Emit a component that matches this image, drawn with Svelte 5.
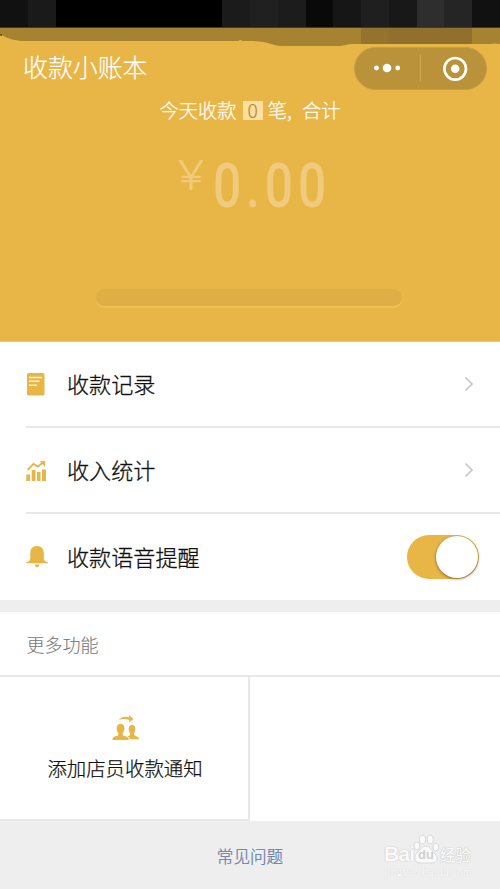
<script>
    let voiceOn = true;

    const blocks = [
        "#111111", "#1a1a1a", "#000000", "#000000", "#000000", "#000000",
        "#000000", "#000000", "#1b1b1b", "#202020", "#1c1c1c", "#090909",
        "#161616", "#1f1f1f", "#181818", "#2e2e2e", "#252525", "#111111"
    ];

    function toggleVoice(){
        voiceOn = !voiceOn;
    }
</script>

<div class="page">
    <header class="hero">
        <div class="status">
            {#each blocks as color}
                <span style="background:{color}"></span>
            {/each}
        </div>
        <svg class="shade" width="500" height="19" viewBox="0 0 500 19">
            <path fill="#a58331" d="M0 0H500V16L495 15.500L490 16H350Q342 18 338 18H282C272 18 268 13 250 13H243L240 12L238 13H21C12 12 7 10 0 6Z"/>
            <path fill="#755927" fill-opacity=".35" d="M361 0H472V16H361Z"/>
            <path fill="#755927" fill-opacity=".12" d="M389 0H472V16H389Z"/>
            <path fill="#111" d="M0 6.500H2V7.500H0Z"/>
        </svg>
        <div class="nav">
            <h1>收款小账本</h1>
            <div class="capsule">
                <svg width="133" height="44" viewBox="0 0 133 44">
                    <circle cx="22.500" cy="21" r="2.400" fill="#fff"/>
                    <circle cx="33" cy="21" r="4.300" fill="#fff"/>
                    <circle cx="43.700" cy="21" r="2.400" fill="#fff"/>
                    <path d="M66.500 8V34" stroke="#cfa955"/>
                    <circle cx="101.200" cy="21.800" r="10.800" fill="none" stroke="#fff" stroke-width="2.700"/>
                    <circle cx="101.200" cy="21.800" r="4.300" fill="#fff"/>
                </svg>
            </div>
        </div>
        <div class="today">
            <span>今天收款</span><span class="count">0</span><span>笔</span><span class="comma">,</span><span>合计</span>
        </div>
        <div class="amount">
            <span class="yen">￥</span>
            <span class="number">0.00</span>
        </div>
        <div class="slot"></div>
    </header>

    <section class="list">
        <div class="row">
            <svg class="icon" width="24" height="24" viewBox="0 0 24 24">
                <rect x="1" y="1" width="17.500" height="22.500" rx="1.600" fill="#e8b547"/>
                <path d="M3 5.500H16M3 9.200H13.500M3 13.200H11" stroke="#fff1cd" stroke-width="1.500"/>
            </svg>
            <span class="label">收款记录</span>
            <svg class="arrow" width="10" height="16" viewBox="0 0 10 16">
                <path d="M1.500 1.500L8 8L1.500 14.500" fill="none" stroke="#c7c7cc" stroke-width="1.700"/>
            </svg>
        </div>
        <div class="row">
            <svg class="icon" width="24" height="24" viewBox="0 0 24 24">
                <path fill="#e8b547" d="M.3 16.500H4V23H.3ZM5.700 12H9.500V23H5.700ZM11 14H14.500V23H11ZM16 11.500H20V23H16Z"/>
                <path d="M1.500 12L7.500 6L12 8.500L17.500 4" fill="none" stroke="#e8b547" stroke-width="1.900"/>
                <path fill="#e8b547" d="M13.800 3.200L19.300 3L19 8.700Z"/>
            </svg>
            <span class="label">收入统计</span>
            <svg class="arrow" width="10" height="16" viewBox="0 0 10 16">
                <path d="M1.500 1.500L8 8L1.500 14.500" fill="none" stroke="#c7c7cc" stroke-width="1.700"/>
            </svg>
        </div>
        <div class="row">
            <svg class="icon" width="24" height="24" viewBox="0 0 24 24">
                <path fill="#e8b547" d="M11 1C6.500 1 4.300 4 4.300 8V13.500C4.300 15.500 3 16.500.3 17.300V18.300H21.900V17.300C19 16.500 17.800 15.500 17.800 13.500V8C17.800 4 15.500 1 11 1ZM8.600 19.500H13.400C13 21.300 12 22.200 11 22.200S9 21.300 8.600 19.500Z"/>
            </svg>
            <span class="label">收款语音提醒</span>
            <button class="switch" class:on={voiceOn} aria-label="收款语音提醒" on:click={toggleVoice}><i></i></button>
        </div>
    </section>

    <section class="more">
        <h2>更多功能</h2>
        <div class="grid">
            <div class="cell">
                <svg width="28" height="28" viewBox="0 0 28 28">
                    <g fill="#e8b547" transform="translate(1 0)">
                        <path d="M6.500 5.500C9.500 1.500 13 1.300 17 2.500V.3L21.500 4L17.300 7.300V5C13 3.700 10 3.700 6.500 5.500Z"/>
                        <path d="M8.500 9C5.700 9 4.500 11 4.700 13.700C4.900 16 5.500 17 6.300 18V19.700C6 21.200.8 21 .5 24V25H16.700V24C16.400 21 11 21.200 10.700 19.700V18C11.700 17 12.200 16 12.400 13.700C12.600 11 11.400 9 8.500 9Z"/>
                        <path d="M20 10C17.500 10 16.500 12 16.700 14.300C16.900 16.300 17.400 17.300 18.100 18.100V19.500C18 20.500 17 20.800 15.500 21.300C17 22.200 17.700 23 17.800 24.200H27V23.500C26.500 21.200 22.300 21 22 19.500V18.100C22.700 17.300 23.200 16.300 23.400 14.300C23.600 12 22.500 10 20 10Z"/>
                    </g>
                </svg>
                <span>添加店员收款通知</span>
            </div>
            <div class="cell empty"></div>
        </div>
    </section>

    <footer>
        <span class="faq">常见问题</span>
        <div class="watermark">
            <div class="brand">
                <span class="bai">Bai</span>
                <span class="paw">
                    <svg width="26" height="30" viewBox="0 0 26 30">
                        <g fill="#fafafa" stroke="#d8d8d8" stroke-width="1">
                            <ellipse cx="3.800" cy="12" rx="3" ry="4"/>
                            <ellipse cx="9.500" cy="5.500" rx="3" ry="4.300"/>
                            <ellipse cx="17.200" cy="5.500" rx="3" ry="4.300"/>
                            <ellipse cx="22.800" cy="13" rx="2.900" ry="4"/>
                            <path d="M13 12C9 12 8 16 5 18C0 22 1 29 7 29H19C25 29 26 23 21 19C18 16 17 12 13 12Z"/>
                        </g>
                    </svg>
                    <b>du</b>
                </span>
                <span class="exp">经验</span>
            </div>
            <div class="site">jingyan.baidu.com</div>
        </div>
    </footer>
</div>

<style>
    :global(body){
        margin: 0;
    }
    .page{
        width: 500px;
        height: 889px;
        display: flex;
        flex-direction: column;
        overflow: hidden;
        background: #eeeeee;
        font-family: "Noto Sans CJK SC", sans-serif;
        font-weight: 300;
        color: #111;
    }
    .hero{
        flex: none;
        box-sizing: border-box;
        height: 342px;
        display: flex;
        flex-direction: column;
        background: #e8b547;
        border-bottom: 1px solid #efc773;
    }
    .status{
        display: grid;
        grid-template-columns: repeat(18, 1fr);
        height: 27px;
        border-bottom: 1px solid #493918;
    }
    .shade{
        display: block;
        flex: none;
    }
    .nav{
        display: flex;
        justify-content: space-between;
        padding: 0 13px 0 23px;
        height: 43px;
    }
    h1{
        margin: 0;
        font-size: 24.900px;
        line-height: 38px;
        font-weight: 300;
        color: #fff;
        -webkit-text-stroke: .2px #fff;
    }
    .capsule{
        width: 131px;
        height: 41px;
        border: 1px solid #c39d4a;
        border-radius: 22px;
        background: #b99239;
    }
    .capsule svg{
        display: block;
        margin: -1px;
    }
    .today{
        display: flex;
        align-items: center;
        justify-content: center;
        height: 20px;
        margin-top: 10px;
        font-size: 19.300px;
        line-height: 20px;
        color: #fffaf0;
        -webkit-text-stroke: .3px #fffaf0;
    }
    .count{
        width: 20px;
        height: 19px;
        margin: 0 5px 0 6px;
        background: #fde0a0;
        color: #b48c36;
        -webkit-text-stroke: .2px #b48c36;
        line-height: 18px;
        text-align: center;
    }
    .comma{
        width: 15px;
    }
    .amount{
        display: flex;
        height: 60px;
        margin-top: 36px;
        padding-left: 178px;
    }
    .yen{
        flex: none;
        width: 40px;
        margin: 0 -7px;
        font-size: 40px;
        line-height: 32px;
        color: #f0cb7d;
        -webkit-text-stroke: .7px #f0cb7d;
    }
    .number{
        font-family: Roboto, sans-serif;
        font-size: 60.500px;
        line-height: 61px;
        font-weight: 500;
        letter-spacing: 6px;
        color: #f0cb7d;
        margin-left: 9px;
        transform: scaleX(.82);
        transform-origin: left;
    }
    .slot{
        width: 306px;
        height: 17px;
        margin: 73px 0 0 96px;
        border-radius: 9px;
        background: #dfaf45;
        box-shadow: 0 2px 0 #efbf58;
    }
    .list{
        flex: none;
        background: #fff;
        height: 258px;
    }
    .row{
        display: flex;
        align-items: center;
        box-sizing: border-box;
        height: 86px;
        margin-left: 26px;
        padding-right: 26px;
        border-bottom: 2px solid #e8e8e8;
    }
    .row:last-child{
        border-bottom: 0;
        padding-right: 21px;
    }
    .label{
        flex: 1;
        margin-left: 17px;
        padding-bottom: 2px;
        font-size: 22.100px;
        line-height: 32px;
        -webkit-text-stroke: .3px #111;
    }
    .switch{
        width: 72px;
        height: 44px;
        padding: 1px;
        border: 0;
        border-radius: 23px;
        background: #ddd;
        display: flex;
    }
    .switch.on{
        background: #e8b547;
        justify-content: flex-end;
    }
    .switch i{
        width: 42px;
        height: 42px;
        border-radius: 50%;
        background: #fff;
        box-shadow: 0 1px 3px rgba(0, 0, 0, .45);
    }
    .more{
        flex: none;
        margin-top: 12px;
        background: #fff;
    }
    h2{
        margin: 0;
        height: 63px;
        padding-left: 26.500px;
        border-bottom: 2px solid #e8e8e8;
        font-size: 18px;
        line-height: 65px;
        font-weight: 300;
        color: #777;
        -webkit-text-stroke: .1px #777;
    }
    .grid{
        display: grid;
        grid-template-columns: 250px 250px;
        height: 144px;
    }
    .cell{
        display: flex;
        flex-direction: column;
        align-items: center;
        box-sizing: border-box;
        padding: 38px 0 0 2px;
        border-right: 2px solid #e8e8e8;
        border-bottom: 2px solid #e8e8e8;
        font-size: 19.400px;
        line-height: 28px;
        -webkit-text-stroke: .25px #111;
    }
    .cell span{
        margin-top: 11px;
    }
    .empty{
        border: 0;
    }
    footer{
        position: relative;
        flex: 1;
        text-align: center;
    }
    .faq{
        font-size: 16.600px;
        line-height: 71px;
        color: #6078a5;
        -webkit-text-stroke: .2px #6078a5;
    }
    .watermark{
        position: absolute;
        left: 384px;
        top: 13px;
        color: #fafafa;
        text-shadow: 0 0 1px #bbb, 0 0 1px #ccc;
        text-align: left;
    }
    .brand{
        display: flex;
        height: 31px;
        align-items: flex-end;
    }
    .bai{
        font: bold 21px/22px "Liberation Sans", sans-serif;
        width: 29px;
        letter-spacing: -.8px;
    }
    .paw{
        position: relative;
        height: 31px;
    }
    .paw b{
        position: absolute;
        left: 5px;
        top: 14px;
        font: bold 13px/14px "Liberation Sans", sans-serif;
        color: #d0d0d0;
        text-shadow: none;
    }
    .exp{
        font-size: 15.500px;
        line-height: 22px;
        font-weight: 500;
        margin-left: 1px;
    }
    .site{
        font: 11.800px/14px "Liberation Serif", serif;
        text-shadow: 0 0 1px #ccc;
    }
</style>
